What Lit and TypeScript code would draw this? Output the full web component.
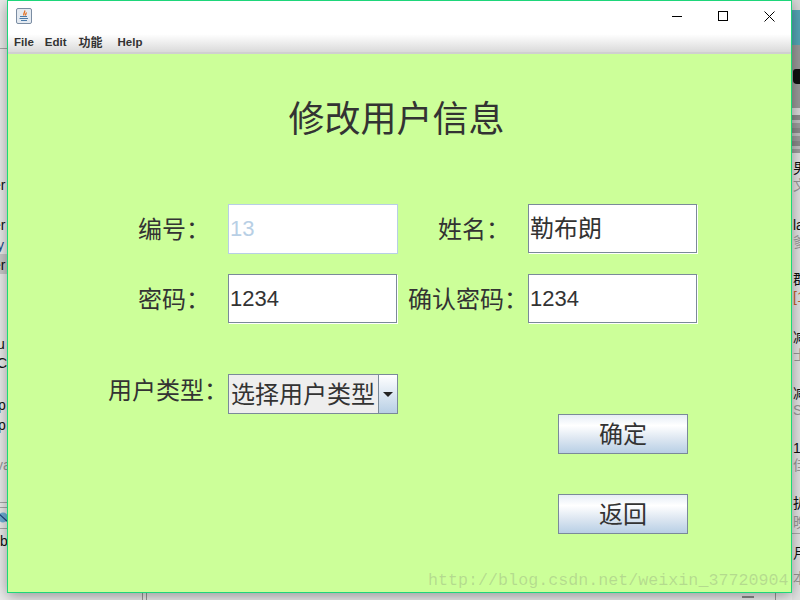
import { LitElement, html, css } from "lit";
import { customElement } from "lit/decorators.js";

const LEFT_TEXT: [string, number, number, string][] = [
  ["er", -7, 177, ""],
  ["er", -7, 217, ""],
  ["y", -3, 237, "blue"],
  ["er", -7, 257, ""],
  ["u", -3, 336, ""],
  ["C", -3, 355, ""],
  ["p", -2, 397, ""],
  ["p", -2, 417, ""],
  ["va", -4, 457, "grey"],
  ["b", 0, 533, ""],
];

const RIGHT_TEXT: [string, number, string][] = [
  ["男", 160, ""],
  ["文", 177, "grey"],
  ["la", 217, ""],
  ["爹", 234, "grey"],
  ["群", 271, ""],
  ["[1", 289, "orange"],
  ["减", 329, ""],
  ["士", 347, "grey"],
  ["减", 385, ""],
  ["SY", 402, "grey"],
  ["14", 440, ""],
  ["佳", 457, "grey"],
  ["扒", 495, ""],
  ["晚", 514, "grey"],
  ["月", 545, ""],
  ["本", 570, "grey"],
];

@customElement("app-root")
export class AppRoot extends LitElement {
  static styles = css`
    :host {
      display: block;
      position: relative;
      width: 800px;
      height: 600px;
      overflow: hidden;
      background: #ececec;
      font-family: "Liberation Sans", "Noto Sans CJK SC", sans-serif;
    }
    .desk { position: absolute; inset: 0; overflow: hidden; }
    .frag { position: absolute; font-size: 14px; line-height: 16px; color: #111; white-space: nowrap; }
    .frag.grey { color: #999; }
    .frag.blue { color: #1a4a8a; }
    .frag.orange { color: #c9602a; }
    .hl { position: absolute; left: 0; top: 254px; width: 8px; height: 20px; background: #cacaca; }
    .line { position: absolute; left: 0; width: 8px; height: 1px; background: #a8a8a8; }
    .globe { position: absolute; left: 0; top: 512px; }
    .vline { position: absolute; top: 590px; width: 1px; height: 10px; background: #999; }
    .dash { position: absolute; left: 742px; top: 596px; width: 12px; height: 2px; background: #8a8a8a; }
    .right {
      position: absolute;
      left: 792px;
      top: 0;
      width: 8px;
      height: 600px;
      background: #e4e4e4;
    }
    .t0 { height: 10px; background: #d8d8d8; }
    .t1 { height: 35px; background: #55a6b6; }
    .t2 { height: 63px; background: #9a9a9a; position: relative; }
    .blob { position: absolute; left: 1px; top: 24px; width: 7px; height: 15px; background: #111; border-radius: 3px 0 0 4px; }
    .t3 { height: 7px; background: #dadada; }
    .t4 { height: 38px; background: repeating-linear-gradient(#8c8c8c 0 5px, #c2c2c2 5px 8px, #9e9e9e 8px 13px); }
    .divider { position: absolute; left: 792px; top: 533px; width: 8px; height: 1px; background: #aaa; }
    .window {
      position: absolute;
      left: 7px;
      top: 0;
      width: 785px;
      height: 593px;
      box-sizing: border-box;
      border: 1px solid #1ed67a;
      box-shadow: 0 3px 14px rgba(0, 0, 0, 0.38);
      display: flex;
      flex-direction: column;
      background: #fff;
    }
    .titlebar {
      height: 30px;
      display: flex;
      align-items: center;
      justify-content: space-between;
      background: #fff;
      padding-left: 8px;
      flex: none;
    }
    .caps { display: flex; height: 30px; margin-right: -1px; }
    .cap { width: 46px; display: flex; align-items: center; justify-content: center; }
    .menubar {
      height: 21px;
      flex: none;
      display: flex;
      align-items: center;
      gap: 11px;
      padding-left: 6px;
      font-size: 11.5px;
      font-weight: bold;
      color: #333;
      background: linear-gradient(#fff 0%, #fff 15%, #dadada 100%);
      border-bottom: 2px solid #d0d0d0;
    }
    .menubar .zh { font-size: 12px; margin: 0 4px 0 1px; }
    .content {
      flex: 1;
      background: #ccff99;
      color: #333;
      font-size: 24px;
    }
    .heading {
      margin: 0;
      padding: 43px 6px 0 0;
      height: 46px;
      font-size: 36px;
      line-height: 46px;
      font-weight: normal;
      text-align: center;
      color: #333;
    }
    .form {
      margin-top: 61px;
      margin-left: 100px;
      display: grid;
      grid-template-columns: 120px 170px 10px 120px 170px;
      grid-template-rows: 50px 50px;
      row-gap: 20px;
    }
    .lab { display: flex; align-items: center; line-height: 30px; white-space: nowrap; padding-top: 2px; box-sizing: border-box; }
    .lab.two { padding-left: 30px; }
    .input {
      box-sizing: border-box;
      background: #fff;
      border: 1px solid #7a8a99;
      margin: 0 1px 1px 0;
      box-shadow: 1px 1px 0 #fff;
      display: flex;
      align-items: center;
      padding-left: 1px;
      white-space: nowrap;
    }
    .input.off { border-color: #b8cfe5; color: #b8cfe5; margin: 0; box-shadow: none; }
    .num { font-size: 22px; }
    .zhval { padding-bottom: 4px; }
    .lower { margin-left: 100px; display: grid; grid-template-columns: 120px 170px; margin-top: 50px; }
    .lower .lab { padding: 0 0 6px 0; }
    .combo {
      height: 40px;
      box-sizing: border-box;
      border: 1px solid #7a8a99;
      display: flex;
      background: #eeeeee;
    }
    .combo-text { width: 149px; display: flex; align-items: center; padding: 0 0 4px 2px; box-sizing: border-box; white-space: nowrap; }
    .combo-btn {
      flex: 1;
      border-left: 1px solid #7a8a99;
      background: linear-gradient(#fff, #b8cfe5);
      display: flex;
      align-items: center;
      justify-content: center;
    }
    .actions {
      margin-left: 550px;
      display: flex;
      flex-direction: column;
      gap: 40px;
    }
    .btn {
      width: 130px;
      height: 40px;
      box-sizing: border-box;
      border: 1px solid #7a8a99;
      padding-bottom: 3px;
      background: linear-gradient(#e6eef6 0%, #fff 28%, #dfe8f2 60%, #b8cfe5 100%);
      display: flex;
      align-items: center;
      justify-content: center;
      color: #333;
    }
    .mark {
      position: absolute;
      left: 428px;
      top: 569px;
      font-family: "Liberation Mono", monospace;
      font-size: 16.7px;
      line-height: 24px;
      color: rgba(110, 110, 110, 0.25);
      white-space: nowrap;
    }
  `;

  render() {
    return html`
      <div class="desk">
        <div class="hl"></div>
        <div class="line" style="top:48px"></div>
        ${LEFT_TEXT.map(
          ([t, x, y, c]) => html`<div class="frag ${c}" style="left:${x}px;top:${y}px">${t}</div>`
        )}
        <div class="line" style="top:502px"></div>
        <div class="line" style="top:507px"></div>
        <svg class="globe" width="8" height="11" viewBox="0 0 8 11">
          <circle cx="3" cy="5.500" r="5" fill="#6fb0d8" />
          <path d="M-2 1l10 9" stroke="#1c3f7a" stroke-width="1.200" />
        </svg>
        <div class="line" style="top:528px"></div>
        <div class="right">
          <div class="t0"></div>
          <div class="t1"></div>
          <div class="t2"><div class="blob"></div></div>
          <div class="t3"></div>
          <div class="t4"></div>
        </div>
        <div class="divider"></div>
        ${RIGHT_TEXT.map(
          ([t, y, c]) => html`<div class="frag ${c}" style="left:793px;top:${y}px">${t}</div>`
        )}
        <div class="vline" style="left:142px"></div>
        <div class="vline" style="left:146px"></div>
        <div class="dash"></div>
        <div class="vline" style="left:775px"></div>
      </div>
      <div class="window">
        <div class="titlebar">
          <svg width="16" height="16" viewBox="0 0 16 16">
            <rect x="0.5" y="0.5" width="15" height="15" rx="1.500" fill="#e4eaf1" stroke="#7b8da3" />
            <path d="M8.500 2.500c1.200 1.800-1.800 2.800-.5 5M10 4.500c.8 1-1 1.800-.3 3" stroke="#e2742a" fill="none" stroke-width="1.400" />
            <path d="M4 8.500h7M3.500 10.500h8.500M5 12.500h6" stroke="#4a7aa8" fill="none" />
          </svg>
          <div class="caps">
            <div class="cap">
              <svg width="10" height="10" viewBox="0 0 10 10"><path d="M0 5.500h10" stroke="#000" /></svg>
            </div>
            <div class="cap">
              <svg width="10" height="10" viewBox="0 0 10 10"><rect x=".5" y=".5" width="9" height="9" fill="none" stroke="#000" /></svg>
            </div>
            <div class="cap">
              <svg width="11" height="11" viewBox="0 0 11 11"><path d="M.5.500l10 10M10.500.500l-10 10" stroke="#000" /></svg>
            </div>
          </div>
        </div>
        <div class="menubar"><span>File</span><span>Edit</span><span class="zh">功能</span><span>Help</span></div>
        <div class="content">
          <h1 class="heading">修改用户信息</h1>
          <div class="form">
            <div class="lab two">编号：</div>
            <div class="input off"><span class="num">13</span></div>
            <div></div>
            <div class="lab two">姓名：</div>
            <div class="input"><span class="zhval">勒布朗</span></div>
            <div class="lab two">密码：</div>
            <div class="input"><span class="num">1234</span></div>
            <div></div>
            <div class="lab">确认密码：</div>
            <div class="input"><span class="num">1234</span></div>
          </div>
          <div class="lower">
            <div class="lab">用户类型：</div>
            <div class="combo">
              <div class="combo-text">选择用户类型</div>
              <div class="combo-btn">
                <svg width="10" height="5" viewBox="0 0 10 5"><path d="M0 0h10L5 5z" fill="#222" /></svg>
              </div>
            </div>
          </div>
          <div class="actions">
            <div class="btn">确定</div>
            <div class="btn">返回</div>
          </div>
        </div>
      </div>
      <div class="mark">http://blog.csdn.net/weixin_37720904</div>
    `;
  }
}
